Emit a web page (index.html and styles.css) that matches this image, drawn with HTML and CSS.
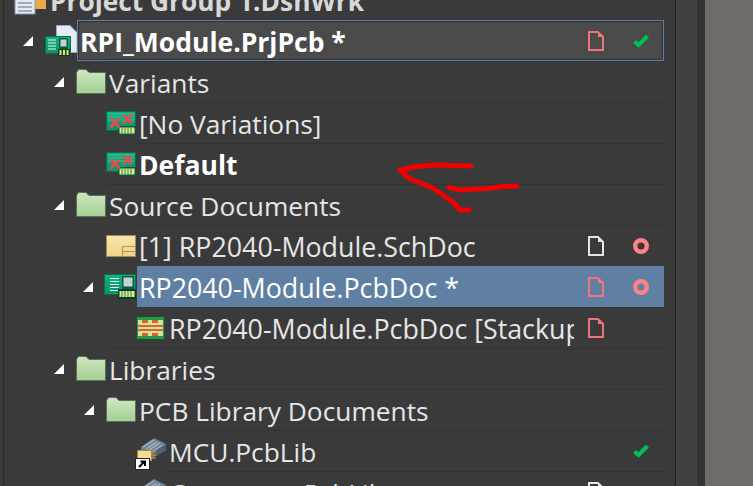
FILE: index.html
```html
<!DOCTYPE html>
<html lang="en">
<head>
<meta charset="utf-8">
<title>Projects</title>
<link rel="stylesheet" href="styles.css">
</head>
<body>
<svg class="defs" width="0" height="0" aria-hidden="true">
  <defs>
    <linearGradient id="folderFill" x1="0" y1="0" x2="0" y2="1"><stop offset="0" stop-color="#cfe6c2"/><stop offset="1" stop-color="#a2d092"/></linearGradient>
    <linearGradient id="schFill" x1="0" y1="0" x2="0" y2="1"><stop offset="0" stop-color="#f8e6ac"/><stop offset="1" stop-color="#f0d383"/></linearGradient>
    <linearGradient id="boardFill" x1="0" y1="0" x2="0" y2="1"><stop offset="0" stop-color="#12b080"/><stop offset="1" stop-color="#0a9468"/></linearGradient>
    <symbol id="arrow" viewBox="0 0 10 10"><polygon points="10,0 10,10 0,10" fill="#fff"/></symbol>
    <symbol id="folder" viewBox="0 0 30 25"><path d="M0.500 24.500V3.500L2.500 0.500H10L13 3.500H29.500V24.500Z" fill="url(#folderFill)" stroke="#5d6f57"/></symbol>
    <symbol id="variant" viewBox="0 0 30 24">
      <rect x="0.500" y="0.500" width="29" height="19" fill="url(#boardFill)" stroke="#0a6d4e"/>
      <path d="M2 3H28M2 6H28M2 9H28" stroke="#35c79a" stroke-width="1"/>
      <rect x="12" y="15" width="18" height="9" fill="#08583f"/>
      <rect x="13.500" y="16.500" width="15" height="6" fill="#e6e88a"/>
      <path d="M16 16.500V22.500M19 16.500V22.500M22 16.500V22.500M25 16.500V22.500" stroke="#1f8a5a" stroke-width="1"/>
      <path d="M4.500 7.500L13.500 16.500M13.500 7.500L4.500 16.500M17 3.500L26 12.500M26 3.500L17 12.500" stroke="#ec4a4e" stroke-width="2.600"/>
    </symbol>
    <symbol id="sch" viewBox="0 0 30 22">
      <rect x="0.500" y="0.500" width="29" height="21" fill="url(#schFill)" stroke="#9c8d60"/>
      <path d="M16.500 21.500V11.500H29.500M16.500 16.500H29.500" fill="none" stroke="#a89765"/>
    </symbol>
    <symbol id="pcb" viewBox="0 0 32 25">
      <rect x="0.500" y="0.500" width="31" height="20" fill="url(#boardFill)" stroke="#0a6d4e"/>
      <path d="M6 4.500H15M6 7.500H15M6 10.500H15M6 13.500H15M6 16.500H15" stroke="#e6f5ee" stroke-width="1.200"/>
      <rect x="18" y="2" width="12" height="13" fill="#075a44"/>
      <rect x="19.500" y="3.500" width="9" height="9" fill="#c5d4d0"/>
      <rect x="14" y="15" width="18" height="10" fill="#06402f"/>
      <rect x="15.500" y="17" width="15" height="6" fill="#e6e88a"/>
      <path d="M18 17V23M21 17V23M24 17V23M27 17V23" stroke="#1f8a5a" stroke-width="1"/>
    </symbol>
    <symbol id="stackup" viewBox="0 0 27 22">
      <rect x="0.500" y="0.500" width="26" height="21" fill="#cfe39a" stroke="#1f9c45"/>
      <rect x="1" y="1" width="25" height="2" fill="#1f9c45"/>
      <rect x="1" y="19" width="25" height="2" fill="#1f9c45"/>
      <rect x="1" y="8" width="25" height="2" fill="#d8642a"/>
      <rect x="1" y="12" width="25" height="2" fill="#d8642a"/>
      <rect x="5" y="3" width="6" height="3" fill="#d8642a"/><rect x="15" y="3" width="6" height="3" fill="#d8642a"/>
      <rect x="5" y="16" width="6" height="3" fill="#d8642a"/><rect x="15" y="16" width="6" height="3" fill="#d8642a"/>
    </symbol>
    <symbol id="lib" viewBox="0 0 32 33">
      <path d="M7 9L20 0L32 6L32 12L19 20L7 14Z" fill="#6f8294"/>
      <path d="M9 9L20 2M12 11L23 4M15 12L26 5M18 14L29 7" stroke="#a8bacb" stroke-width="1.200"/>
      <path d="M19 20V14L32 6V12Z" fill="#50606e"/>
      <path d="M16 14H22M16 17H22M16 20H22" stroke="#a58a3e" stroke-width="1.500"/>
      <rect x="3.500" y="12.500" width="14" height="10" fill="#f2dc9a" stroke="#a58a3e"/>
      <rect x="1.500" y="20.500" width="14" height="11" fill="#fff" stroke="#222"/>
      <path d="M5 29L10 24M6.500 23.500H11V28" fill="none" stroke="#000" stroke-width="2"/>
    </symbol>
    <symbol id="docline" viewBox="0 0 16 20"><path d="M1 1H10L15 6V19H1Z" fill="none" stroke="currentColor" stroke-width="2"/><path d="M10 1V6H15Z" fill="currentColor"/></symbol>
    <symbol id="check" viewBox="0 0 16 14"><path d="M1.500 7.500L5.500 11L14.500 2" fill="none" stroke="#00c050" stroke-width="4"/></symbol>
    <symbol id="ring" viewBox="0 0 16 16"><circle cx="8" cy="8" r="5.800" fill="none" stroke="#ff8284" stroke-width="4.400"/></symbol>
  </defs>
</svg>

<div class="app">
  <main class="tree">
    <div class="row">
      <div class="gutter g0"><svg class="ic-group" viewBox="0 0 32 36" width="32" height="36"><rect x="17" y="14" width="15" height="16" fill="#e9a94f"/><rect x="1" y="0" width="20" height="35" fill="#e4e9f2" stroke="#8a98ad"/><path d="M4 16H18M4 20H18M4 24H18M4 28H18M4 32H18" stroke="#5f7086" stroke-width="1.200"/></svg></div>
      <div class="cell plain-top"><span class="name strong-dim">Project Group 1.DshWrk</span></div>
    </div>

    <div class="row">
      <div class="gutter g1">
        <svg class="arrow"><use href="#arrow"/></svg>
        <svg class="ic-root" viewBox="0 0 33 31" width="33" height="31">
          <path d="M11.500 0.500H25L32 7.500V27.500H11.500Z" fill="#e6ebf5" stroke="#9aa6bd"/>
          <rect x="0.500" y="11.500" width="25" height="17" fill="url(#boardFill)" stroke="#0a6d4e"/>
          <path d="M3 15H11M3 18H11M3 21H11M3 24H11" stroke="#e6f5ee" stroke-width="1.200"/>
          <rect x="14" y="13" width="9" height="11" fill="#075a44"/>
          <rect x="15.500" y="14.500" width="6" height="7" fill="#c5d4d0"/>
          <rect x="13" y="24" width="12" height="7" fill="#06402f"/>
          <path d="M15.500 25V30M19 25V30M22.500 25V30" stroke="#e8e860" stroke-width="2"/>
        </svg>
      </div>
      <div class="cell focused">
        <span class="name strong">RPI_Module.PrjPcb *</span>
        <svg class="doc doc-red"><use href="#docline"/></svg>
        <svg class="status status-check"><use href="#check"/></svg>
      </div>
    </div>

    <div class="row">
      <div class="gutter g2"><svg class="arrow"><use href="#arrow"/></svg><svg class="ic-folder"><use href="#folder"/></svg></div>
      <div class="cell"><span class="name">Variants</span></div>
    </div>

    <div class="row">
      <div class="gutter g3"><svg class="ic-variant"><use href="#variant"/></svg></div>
      <div class="cell"><span class="name">[No Variations]</span></div>
    </div>

    <div class="row">
      <div class="gutter g3"><svg class="ic-variant"><use href="#variant"/></svg></div>
      <div class="cell"><span class="name strong">Default</span></div>
    </div>

    <div class="row">
      <div class="gutter g2"><svg class="arrow"><use href="#arrow"/></svg><svg class="ic-folder"><use href="#folder"/></svg></div>
      <div class="cell"><span class="name">Source Documents</span></div>
    </div>

    <div class="row">
      <div class="gutter g3"><svg class="ic-sch"><use href="#sch"/></svg></div>
      <div class="cell">
        <span class="name wide">[1] RP2040-Module.SchDoc</span>
        <svg class="doc doc-white"><use href="#docline"/></svg>
        <svg class="status"><use href="#ring"/></svg>
      </div>
    </div>

    <div class="row">
      <div class="gutter g3"><svg class="arrow"><use href="#arrow"/></svg><svg class="ic-pcb"><use href="#pcb"/></svg></div>
      <div class="cell selected">
        <span class="name wide name-white">RP2040-Module.PcbDoc *</span>
        <svg class="doc doc-red"><use href="#docline"/></svg>
        <svg class="status"><use href="#ring"/></svg>
      </div>
    </div>

    <div class="row">
      <div class="gutter g4"><svg class="ic-stack"><use href="#stackup"/></svg></div>
      <div class="cell">
        <span class="name wide">RP2040-Module.PcbDoc [Stackup]</span>
        <svg class="doc doc-red"><use href="#docline"/></svg>
        <span class="status"></span>
      </div>
    </div>

    <div class="row">
      <div class="gutter g2"><svg class="arrow"><use href="#arrow"/></svg><svg class="ic-folder"><use href="#folder"/></svg></div>
      <div class="cell"><span class="name">Libraries</span></div>
    </div>

    <div class="row">
      <div class="gutter g3"><svg class="arrow"><use href="#arrow"/></svg><svg class="ic-folder"><use href="#folder"/></svg></div>
      <div class="cell"><span class="name">PCB Library Documents</span></div>
    </div>

    <div class="row">
      <div class="gutter g4"><svg class="ic-lib"><use href="#lib"/></svg></div>
      <div class="cell">
        <span class="name">MCU.PcbLib</span>
        <span class="doc"></span>
        <svg class="status status-check"><use href="#check"/></svg>
      </div>
    </div>

    <div class="row">
      <div class="gutter g4"><svg class="ic-lib"><use href="#lib"/></svg></div>
      <div class="cell">
        <span class="name">Connector.PcbLib</span>
        <svg class="doc doc-white"><use href="#docline"/></svg>
        <svg class="status status-check"><use href="#check"/></svg>
      </div>
    </div>
  </main>
  <div class="rail"></div>
  <div class="rail-dark"></div>
  <div class="canvas"></div>
</div>

<svg class="scribble" viewBox="0 0 753 486" width="753" height="486" aria-hidden="true">
  <path d="M471 166L433 165L417 166.500L400 170L402 172L410 179L433 188L453 202L460 210H469" fill="none" stroke="#f00000" stroke-width="5" stroke-linecap="round" stroke-linejoin="round"/>
  <path d="M449 187.500L460 190L487 188.500L503 186.500L517 186" fill="none" stroke="#f00000" stroke-width="5" stroke-linecap="round" stroke-linejoin="round"/>
</svg>
</body>
</html>
```
FILE: styles.css
```css
html, body {
  margin: 0;
  padding: 0;
  height: 486px;
  overflow: hidden;
  background: #3a3a3a;
}
.defs { display: block; height: 0; }
.app {
  display: flex;
  height: 486px;
  overflow: hidden;
  font-family: "Open Sans", "Noto Sans", sans-serif;
}
.tree {
  width: 671px;
  flex: none;
  margin-top: -21px;
  border-left: 1px solid #2a2a2a;
  margin-left: 3px;
  border-right: 1px solid #232323;
  background: #3a3a3a;
}
.rail { width: 21px; flex: none; background: #414141; }
.rail-dark { width: 8px; flex: none; background: #343434; }
.canvas { flex: 1; background: #6f6b69; }

.row { display: flex; height: 41px; }
.gutter {
  flex: none;
  display: flex;
  justify-content: flex-end;
  align-items: center;
  box-sizing: border-box;
  padding-right: 1px;
}
.g0 { width: 43px; align-items: flex-start; }
.g1 { width: 73px; }
.g2 { width: 103px; }
.g3 { width: 133px; }
.g4 { width: 163px; }

.cell {
  flex: 1 1 0;
  min-width: 0;
  display: flex;
  align-items: center;
  box-sizing: border-box;
  border-top: 1px solid #323232;
  margin-right: 11px;
  padding-left: 2px;
  padding-right: 15px;
}
.plain-top { border-top: 0; padding-left: 3px; }
.focused {
  background: #4a4a4a;
  border: 1px solid #5b82aa;
  box-shadow: inset 0 0 0 1px #333;
  padding-left: 2px;
  padding-right: 14px;
}
.selected { background: #5f80a3; border-top-color: #5f80a3; }

.name {
  flex: 1;
  min-width: 0;
  overflow: hidden;
  white-space: nowrap;
  font-size: 26.300px;
  line-height: 40px;
  padding-top: 2px;
  color: #e6e6e6;
  margin-right: 14px;
}
.wide { font-size: 26.800px; }
.strong { font-weight: 700; color: #fff; font-size: 26.500px; }
.strong-dim { font-weight: 700; color: #d8d8d8; }
.name-white { color: #fff; }

.doc { flex: none; width: 16px; height: 20px; margin-right: 29px; }
.doc-red { color: #f0747a; }
.doc-white { color: #e6e6e6; }
.status { flex: none; width: 16px; height: 16px; }
.status-check { height: 14px; }

.arrow { width: 10px; height: 10px; flex: none; margin-right: 12px; }
.ic-folder { width: 30px; height: 25px; flex: none; }
.ic-variant { width: 30px; height: 24px; flex: none; }
.ic-sch { width: 30px; height: 22px; flex: none; }
.ic-pcb { width: 32px; height: 25px; flex: none; margin-left: -1px; }
.ic-stack { width: 27px; height: 22px; flex: none; margin-right: 2px; }
.ic-lib { width: 32px; height: 33px; flex: none; margin-top: 8px; }
.ic-root { flex: none; margin-right: -2px; }
.ic-group { flex: none; }

.scribble { position: absolute; left: 0; top: 0; pointer-events: none; }
```
